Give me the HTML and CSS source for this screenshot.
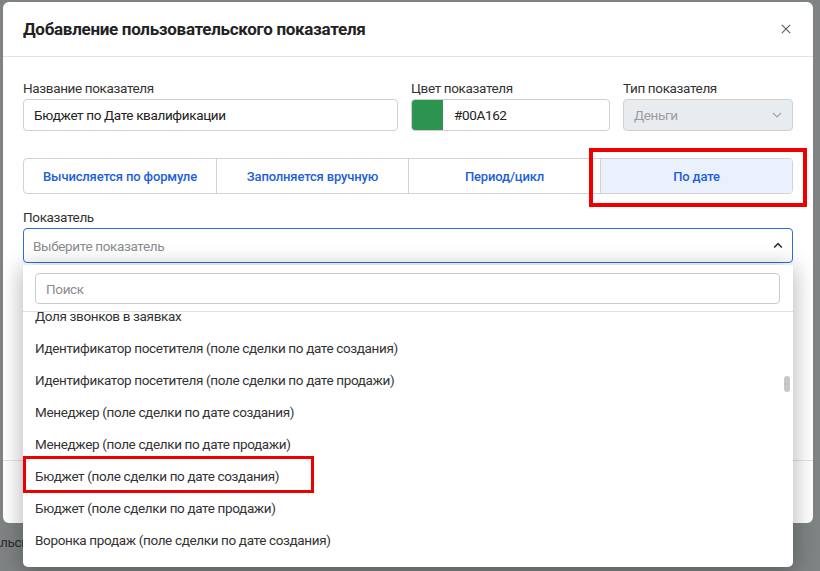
FILE: index.html
```html
<!DOCTYPE html>
<html lang="ru">
<head>
<meta charset="utf-8">
<title>Добавление пользовательского показателя</title>
<link rel="stylesheet" href="styles.css">
</head>
<body>
<div class="modal">
  <div class="modal-header">
    <h1 class="modal-title">Добавление пользовательского показателя</h1>
    <button class="close-btn" aria-label="Закрыть">
      <svg width="10" height="10" viewBox="0 0 10 10"><path d="M0.8 0.8L9.2 9.2M9.2 0.8L0.8 9.2" stroke="#5a5a5a" stroke-width="1.1" fill="none"/></svg>
    </button>
  </div>
  <div class="modal-body">
    <div class="fields">
      <div class="field">
        <div class="label">Название показателя</div>
        <div class="input">Бюджет по Дате квалификации</div>
      </div>
      <div class="field">
        <div class="label">Цвет показателя</div>
        <div class="input color-input"><span class="swatch"></span><span class="color-text">#00A162</span></div>
      </div>
      <div class="field">
        <div class="label">Тип показателя</div>
        <div class="input select-disabled"><span>Деньги</span>
          <svg class="chev" width="10" height="6" viewBox="0 0 10 6"><path d="M1 1L5 5L9 1" stroke="#a0a4a8" stroke-width="1.1" fill="none"/></svg>
        </div>
      </div>
    </div>
    <div class="tabs">
      <div class="tab">Вычисляется по формуле</div>
      <div class="tab">Заполняется вручную</div>
      <div class="tab">Период/цикл</div>
      <div class="tab active">По дате</div>
    </div>
    <div class="metric">
      <div class="label">Показатель</div>
      <div class="input select-open"><span class="placeholder">Выберите показатель</span>
        <svg class="chev" width="10" height="7" viewBox="0 0 10 7"><path d="M1.2 5.5L5 1.7L8.8 5.5" stroke="#333" stroke-width="1.6" fill="none"/></svg>
      </div>
    </div>
  </div>
  <div class="modal-footer"></div>
</div>
<div class="page-text">льск</div>

<div class="dropdown">
  <div class="search-wrap">
    <div class="search">Поиск</div>
  </div>
  <div class="list">
    <div class="list-inner">
      <div class="item">Доля звонков в заявках</div>
      <div class="item">Идентификатор посетителя (поле сделки по дате создания)</div>
      <div class="item">Идентификатор посетителя (поле сделки по дате продажи)</div>
      <div class="item">Менеджер (поле сделки по дате создания)</div>
      <div class="item">Менеджер (поле сделки по дате продажи)</div>
      <div class="item">Бюджет (поле сделки по дате создания)</div>
      <div class="item">Бюджет (поле сделки по дате продажи)</div>
      <div class="item">Воронка продаж (поле сделки по дате создания)</div>
      <div class="item">Воронка продаж (поле сделки по дате продажи)</div>
    </div>
  </div>
  <div class="scroll-thumb"></div>
</div>

<div class="highlight highlight-tab"></div>
<div class="highlight highlight-item"></div>
</body>
</html>
```

FILE: styles.css
```css
* { box-sizing: border-box; }

body {
  margin: 0;
  width: 820px;
  height: 571px;
  overflow: hidden;
  position: relative;
  background: #7f8384;
  font-family: Roboto, "Noto Sans", "DejaVu Sans", sans-serif;
  color: #333;
}

.modal {
  margin: 2px 0 0 3px;
  width: 810px;
  height: 521px;
  background: #fff;
  border-radius: 6px;
  display: flex;
  flex-direction: column;
  overflow: hidden;
}

.modal-header {
  height: 55px;
  flex: none;
  border-bottom: 1px solid #e3e3e3;
  display: flex;
  align-items: center;
  justify-content: space-between;
  padding: 0 20px;
}

.modal-title {
  margin: 0;
  font-size: 17px;
  font-weight: 700;
  color: #222;
  letter-spacing: -0.3px;
}

.close-btn {
  border: 0;
  background: none;
  padding: 0;
  margin-right: 2px;
  margin-top: -1px;
  width: 10px;
  height: 10px;
  display: flex;
}

.modal-body {
  flex: 1;
  padding: 21px 20px 0 20px;
}

.fields {
  display: grid;
  grid-template-columns: 375px 199px 170px;
  column-gap: 13px;
}

.label {
  font-size: 13.5px;
  letter-spacing: -0.35px;
  line-height: 20px;
  color: #333;
  margin-bottom: 1px;
}

.input {
  height: 32px;
  border: 1px solid #cfcfcf;
  border-radius: 4px;
  font-size: 13.5px;
  letter-spacing: -0.35px;
  color: #222;
  display: flex;
  align-items: center;
  padding: 0 10px;
}

.color-input {
  padding: 0;
  overflow: hidden;
}

.swatch {
  width: 31px;
  height: 100%;
  background: #2c9350;
  flex: none;
}

.color-text {
  padding-left: 11px;
}

.select-disabled {
  background: #e9ecef;
  color: #9a9ea2;
  justify-content: space-between;
}

.tabs {
  margin-top: 27px;
  height: 36px;
  display: grid;
  grid-template-columns: repeat(4, 1fr);
  border: 1px solid #d3d3d3;
  border-radius: 4px;
  overflow: hidden;
}

.tab {
  display: flex;
  align-items: center;
  justify-content: center;
  font-size: 13px;
  font-weight: 500;
  letter-spacing: -0.15px;
  color: #1e5fd9;
  border-left: 1px solid #d3d3d3;
}

.tab:first-child { border-left: 0; }

.tab.active {
  background: #eaf1fd;
}

.metric {
  margin-top: 13px;
}

.select-open {
  height: 35px;
  border-color: #2e6fdf;
  justify-content: space-between;
  padding: 0 9px 0 9px;
}

.placeholder {
  color: #8a8d90;
}

.modal-footer {
  height: 63px;
  flex: none;
  border-top: 1px solid #e3e3e3;
}

.page-text {
  margin-top: 9px;
  font-size: 13.5px;
  letter-spacing: -0.35px;
  line-height: 20px;
  color: #2a2d2e;
}

/* Dropdown overlay */
.dropdown {
  position: absolute;
  left: 23px;
  top: 265px;
  width: 770px;
  height: 302px;
  background: #fff;
  border-radius: 0 0 5px 5px;
  box-shadow: 0 4px 22px 2px rgba(0, 0, 0, 0.28);
  overflow: hidden;
}

.search-wrap {
  padding: 8px 13px 7px 12px;
  border-bottom: 1px solid #e2e2e2;
}

.search {
  height: 31px;
  border: 1px solid #cbcbcb;
  border-radius: 4px;
  display: flex;
  align-items: center;
  padding: 0 10px;
  font-size: 13.5px;
  letter-spacing: -0.35px;
  color: #8a8d90;
}

.list {
  height: 254px;
  overflow: hidden;
}

.list-inner {
  margin-top: -12px;
}

.item {
  height: 32px;
  display: flex;
  align-items: center;
  padding-left: 12px;
  font-size: 13.5px;
  letter-spacing: -0.35px;
  color: #333;
}

.scroll-thumb {
  position: absolute;
  right: 3px;
  top: 111px;
  width: 6px;
  height: 16px;
  border-radius: 3px;
  background: #c6c6c6;
}

.highlight {
  position: absolute;
  border: 4px solid #ee0000;
}

.highlight-tab {
  left: 589px;
  top: 148px;
  width: 218px;
  height: 59px;
}

.highlight-item {
  left: 23px;
  top: 456px;
  width: 291px;
  height: 37px;
  border-width: 3.5px;
}
```
